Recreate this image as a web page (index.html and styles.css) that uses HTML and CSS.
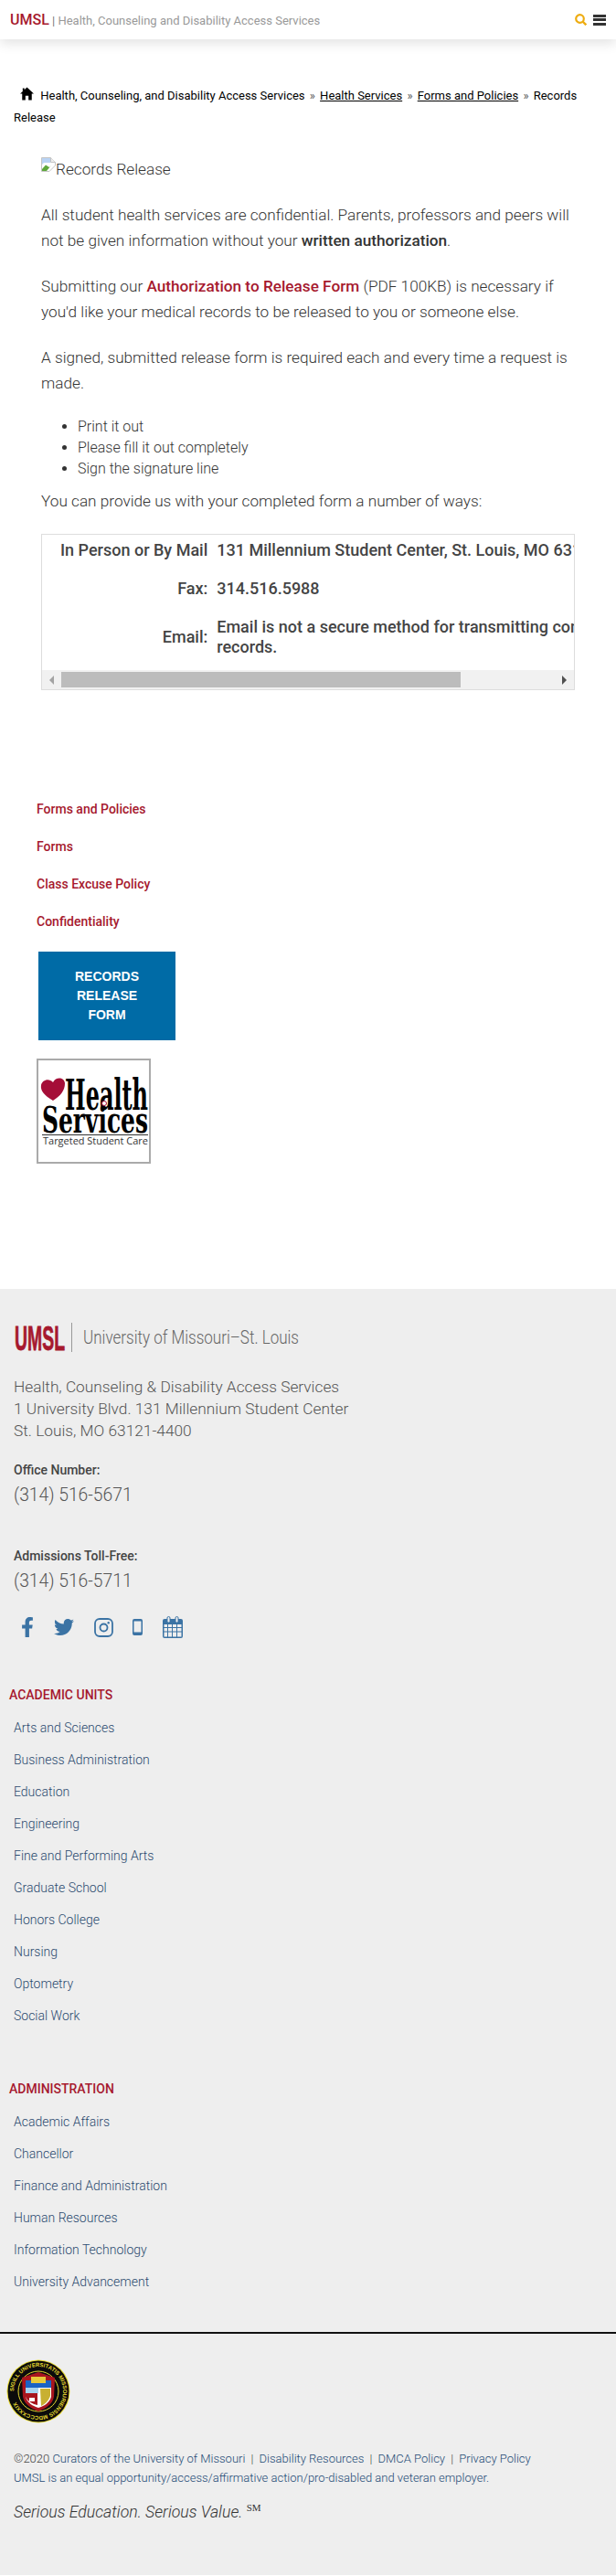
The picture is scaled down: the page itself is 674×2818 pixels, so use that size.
FILE: index.html
```html
<!DOCTYPE html>
<html lang="en">
<head>
    <meta charset="UTF-8">
    <meta name="viewport" content="width=device-width, initial-scale=1.0">
    <title>Records Release</title>
    <link rel="stylesheet" href="styles.css">
</head>
<body>
    <header class="top-bar">
        <div class="site-title"><a class="brand" href="#">UMSL</a> <span class="bar-sep">|</span> Health, Counseling and Disability Access Services</div>
        <div class="top-icons">
            <svg class="search-icon" viewBox="0 0 13 13" width="13" height="13"><circle cx="5.500" cy="5.500" r="4.300" fill="none" stroke="#eeac10" stroke-width="2.200"/><line x1="8.500" y1="8.500" x2="12.300" y2="12.300" stroke="#eeac10" stroke-width="2.400"/></svg>
            <div class="burger"><span></span><span></span><span></span></div>
        </div>
    </header>

    <nav class="breadcrumb">
        <svg class="home-icon" viewBox="0 0 16 16" width="15" height="15"><path d="M8 0.5 L16 8 L13.6 8 L13.6 15.5 L9.8 15.5 L9.8 10.5 L6.2 10.5 L6.2 15.5 L2.4 15.5 L2.4 8 L0 8 L3 5.2 L3 1.5 L5 1.5 L5 3.4 Z" fill="#000"/></svg>
        Health, Counseling, and Disability Access Services <span class="crumb-sep">»</span> <a href="#">Health Services</a> <span class="crumb-sep">»</span> <a href="#">Forms and Policies</a> <span class="crumb-sep">»</span> Records Release
    </nav>

    <main class="content">
        <p class="broken-image"><svg class="broken-icon" viewBox="0 0 16 16" width="16" height="16"><path d="M0.5 0.5 H10.5 L15.5 5.5 V9 L9 15.5 H0.5 Z" fill="#fff" stroke="#c4c4c4"/><path d="M10.5 0.5 V5.5 H15.5" fill="#eee" stroke="#c4c4c4"/><path d="M1 1 H10 V6 H3 L1 8 Z" fill="#b9d3f4"/><path d="M1 13 L5 8.5 L9 11 L11 9 L6 15 H1 Z" fill="#5fa83c"/></svg>Records Release</p>
        <p>All student health services are confidential. Parents, professors and peers will not be given information without your <strong>written authorization</strong>.</p>
        <p>Submitting our <a class="form-link" href="#">Authorization to Release Form</a> (PDF 100KB) is necessary if you'd like your medical records to be released to you or someone else.</p>
        <p>A signed, submitted release form is required each and every time a request is made.</p>
        <ul class="steps">
            <li>Print it out</li>
            <li>Please fill it out completely</li>
            <li>Sign the signature line</li>
        </ul>
        <p>You can provide us with your completed form a number of ways:</p>
        <div class="table-box">
            <div class="table-wrap">
                <table class="ways-table">
                    <tr><th>In Person or By Mail</th><td>131 Millennium Student Center, St. Louis, MO 63121-4400</td></tr>
                    <tr><th>Fax:</th><td>314.516.5988</td></tr>
                    <tr><th>Email:</th><td>Email is not a secure method for transmitting confidential medical<br>records.</td></tr>
                </table>
            </div>
            <div class="scroll-bar">
                <span class="scroll-btn"><i class="arrow-left"></i></span>
                <span class="scroll-thumb"></span>
                <span class="scroll-btn scroll-btn-end"><i class="arrow-right"></i></span>
            </div>
        </div>
    </main>

    <aside class="side-nav">
        <a href="#">Forms and Policies</a>
        <a href="#">Forms</a>
        <a href="#">Class Excuse Policy</a>
        <a href="#">Confidentiality</a>
    </aside>

    <a class="release-button" href="#">RECORDS<br>RELEASE<br>FORM</a>

    <div class="health-logo">
        <svg viewBox="0 0 121 111" width="121" height="111">
            <path d="M16 44 C6 38 2 33 3 27 C4 21 12 19 16 24 C19 18 28 18 29 25 C29 33 24 39 16 44 Z" fill="#a50e38"/>
            <text x="29" y="54" class="logo-word" textLength="91" lengthAdjust="spacingAndGlyphs">Health</text>
            <text x="4" y="79" class="logo-word logo-word-low" textLength="116" lengthAdjust="spacingAndGlyphs">Services</text>
            <circle cx="72" cy="47" r="2.500" fill="#fff" stroke="#a50e38" stroke-width="1"/>
            <rect x="4" y="81" width="116" height="1" fill="#333"/>
            <text x="5" y="92" class="logo-tag" textLength="115" lengthAdjust="spacingAndGlyphs">Targeted Student Care</text>
        </svg>
    </div>

    <footer class="site-footer">
        <div class="footer-brand">
            <svg viewBox="0 0 58 32" width="58" height="32"><text x="1" y="29.500" class="umsl-mark" textLength="55" lengthAdjust="spacingAndGlyphs">UMSL</text></svg>
            <span class="brand-rule"></span>
            <svg class="brand-name" viewBox="0 0 240 32" width="240" height="32"><text x="0" y="23" textLength="236" lengthAdjust="spacingAndGlyphs">University of Missouri–St. Louis</text></svg>
        </div>
        <address class="footer-address">Health, Counseling &amp; Disability Access Services<br>1 University Blvd. 131 Millennium Student Center<br>St. Louis, MO 63121-4400</address>
        <div class="phone-block">
            <strong>Office Number:</strong>
            <span class="phone">(314) 516-5671</span>
        </div>
        <div class="phone-block phone-second">
            <strong>Admissions Toll-Free:</strong>
            <span class="phone">(314) 516-5711</span>
        </div>
        <div class="social">
            <svg class="ico-fb" viewBox="0 0 320 512" width="14" height="22"><path d="M279.14 288l14.22-92.66h-88.91v-60.13c0-25.35 12.42-50.06 52.24-50.06h40.42V6.26S260.43 0 225.36 0c-73.22 0-121.08 44.38-121.08 124.72v70.62H22.89V288h81.39v224h100.17V288z"/></svg>
            <svg class="ico-tw" viewBox="0 0 512 512" width="22" height="22"><path d="M459.37 151.716c.325 4.548.325 9.097.325 13.645 0 138.72-105.583 298.558-298.558 298.558-59.452 0-114.68-17.219-161.137-47.106 8.447.974 16.568 1.299 25.34 1.299 49.055 0 94.213-16.568 130.274-44.832-46.132-.975-84.792-31.188-98.112-72.772 6.498.974 12.995 1.624 19.818 1.624 9.421 0 18.843-1.3 27.614-3.573-48.081-9.747-84.143-51.98-84.143-102.985v-1.299c13.969 7.797 30.214 12.67 47.431 13.319-28.264-18.843-46.781-51.005-46.781-87.391 0-19.492 5.197-37.36 14.294-52.954 51.655 63.675 129.3 105.258 216.365 109.807-1.624-7.797-2.599-15.918-2.599-24.04 0-57.828 46.782-104.934 104.934-104.934 30.213 0 57.502 12.67 76.67 33.137 23.715-4.548 46.456-13.32 66.599-25.34-7.798 24.366-24.366 44.833-46.132 57.827 21.117-2.273 41.584-8.122 60.426-16.243-14.292 20.791-32.161 39.308-52.628 54.253z"/></svg>
            <svg class="ico-ig" viewBox="0 0 21 21" width="21" height="21"><rect x="1" y="1" width="19" height="19" rx="5" fill="none" stroke-width="1.800"/><circle cx="10.500" cy="10.500" r="4" fill="none" stroke-width="1.800"/><circle cx="15.700" cy="5.300" r="1.200" class="ico-fill"/></svg>
            <svg class="ico-ph" viewBox="0 0 11 18" width="11" height="18"><path fill-rule="evenodd" d="M2 0 H9 A2 2 0 0 1 11 2 V16 A2 2 0 0 1 9 18 H2 A2 2 0 0 1 0 16 V2 A2 2 0 0 1 2 0 Z M1.500 2.500 V14.500 H9.500 V2.500 Z"/></svg>
            <svg class="ico-cal" viewBox="0 0 22 24" width="22" height="24"><path fill-rule="evenodd" d="M2 3 H20 A2 2 0 0 1 22 5 V22 A2 2 0 0 1 20 24 H2 A2 2 0 0 1 0 22 V5 A2 2 0 0 1 2 3 Z M1.500 9 V12 H5 V9 Z M6 9 V12 H10 V9 Z M11 9 V12 H15 V9 Z M16 9 V12 H20.500 V9 Z M1.500 13 V16.500 H5 V13 Z M6 13 V16.500 H10 V13 Z M11 13 V16.500 H15 V13 Z M16 13 V16.500 H20.500 V13 Z M1.500 17.500 V22.500 H5 V17.500 Z M6 17.500 V22.500 H10 V17.500 Z M11 17.500 V22.500 H15 V17.500 Z M16 17.500 V22.500 H20.500 V17.500 Z"/><rect x="5" y="0.500" width="3" height="6.500" rx="1.500" fill="#eee" stroke-width="1"/><rect x="14" y="0.500" width="3" height="6.500" rx="1.500" fill="#eee" stroke-width="1"/></svg>
        </div>

        <h3 class="links-title">ACADEMIC UNITS</h3>
        <ul class="footer-links">
            <li><a href="#">Arts and Sciences</a></li>
            <li><a href="#">Business Administration</a></li>
            <li><a href="#">Education</a></li>
            <li><a href="#">Engineering</a></li>
            <li><a href="#">Fine and Performing Arts</a></li>
            <li><a href="#">Graduate School</a></li>
            <li><a href="#">Honors College</a></li>
            <li><a href="#">Nursing</a></li>
            <li><a href="#">Optometry</a></li>
            <li><a href="#">Social Work</a></li>
        </ul>

        <h3 class="links-title">ADMINISTRATION</h3>
        <ul class="footer-links">
            <li><a href="#">Academic Affairs</a></li>
            <li><a href="#">Chancellor</a></li>
            <li><a href="#">Finance and Administration</a></li>
            <li><a href="#">Human Resources</a></li>
            <li><a href="#">Information Technology</a></li>
            <li><a href="#">University Advancement</a></li>
        </ul>

        <hr class="footer-rule">

        <svg class="seal" viewBox="0 0 70 70" width="70" height="70">
            <circle cx="35" cy="35" r="34.500" fill="#e6d92f"/>
            <circle cx="35" cy="35" r="33.500" fill="#0b0b0b"/>
            <circle cx="35" cy="35" r="22" fill="none" stroke="#e6d92f" stroke-width="1"/>
            <path id="sealRing" d="M35 35 m-27 0 a27 27 0 1 1 54 0 a27 27 0 1 1 -54 0" fill="none"/>
            <text class="seal-text"><textPath href="#sealRing">SIGILL UNIVERSITATIS MISSOURIENSIS MDCCCXXXIX</textPath></text>
            <path d="M17 20 L35 14 L53 20 L52 41 C50 50 42 54 35 57 C28 54 20 50 18 41 Z" fill="#a8151e"/>
            <path d="M21 23 H49 V41 C47 48 41 51 35 53 C29 51 23 48 21 41 Z" fill="#fff"/>
            <rect x="21" y="23" width="28" height="8" fill="#1a63c4"/>
            <rect x="27" y="19" width="16" height="7" fill="#e8c93a"/>
            <path d="M21 31 H35 V37 H21 Z" fill="#a6d3ee"/>
            <path d="M21 37 H34 V50 C29 49 23 46 21 41 Z" fill="#a8151e"/>
            <path d="M25 42 H31 V46 H25 Z" fill="#fff"/>
            <path d="M37 32 H48 V40 C46 46 42 49 38 51 Z" fill="#c8b032"/>
        </svg>

        <div class="legal">
            <p>©2020 <a href="#">Curators of the University of Missouri</a> <span class="pipe">|</span> <a href="#">Disability Resources</a> <span class="pipe">|</span> <a href="#">DMCA Policy</a> <span class="pipe">|</span> <a href="#">Privacy Policy</a></p>
            <p><a href="#">UMSL is an equal opportunity/access/affirmative action/pro-disabled and veteran employer.</a></p>
        </div>
        <p class="tagline">Serious Education. Serious Value. <sup>SM</sup></p>
    </footer>
</body>
</html>
```

FILE: styles.css
```css
body {
    font-family: Roboto, Arial, sans-serif;
    margin: 0;
    padding: 0;
    background-color: #fff;
    color: #333;
}
a {
    color: inherit;
    text-decoration: none;
}

/* top bar */
.top-bar {
    height: 43px;
    background-color: #fff;
    box-shadow: 0 4px 14px rgba(0,0,0,0.12);
    display: flex;
    justify-content: space-between;
    align-items: center;
    padding: 0 11px;
}
.site-title {
    font-size: 13px;
    color: #999;
}
.brand {
    font-size: 16px;
    font-weight: 500;
    color: #a6192e;
}
.bar-sep {
    color: #777;
}
.top-icons {
    display: flex;
    align-items: center;
    gap: 7px;
}
.burger {
    width: 14px;
    display: flex;
    flex-direction: column;
    gap: 1.5px;
}
.burger span {
    height: 3px;
    background-color: #333;
}

/* breadcrumb */
.breadcrumb {
    margin-top: 50px;
    padding: 0 15px;
    font-size: 13px;
    line-height: 24px;
    color: #000;
}
.breadcrumb a {
    text-decoration: underline;
}
.home-icon {
    margin: 0 4px 0 7px;
    vertical-align: -1px;
}
.crumb-sep {
    color: #555;
    margin: 0 2px;
}

/* main text */
.content {
    padding: 0 45px;
    font-size: 17.2px;
    font-weight: 300;
    line-height: 28px;
}
.content p {
    margin: 0 0 22px;
}
.content strong {
    font-weight: 500;
}
.content .broken-image {
    margin: 30px 0 22px;
}
.broken-icon {
    vertical-align: 3px;
}
.form-link {
    color: #a6192e;
    font-weight: 500;
}
.steps {
    margin: 0 0 10px;
    padding: 0 0 0 40px;
    font-size: 16px;
    line-height: 23px;
}
.table-box {
    border: 1px solid #ddd;
}
.table-wrap {
    overflow: hidden;
}
.ways-table {
    margin: -4px 0 4px;
    border-collapse: collapse;
    font-weight: 500;
    font-size: 18px;
    line-height: 22px;
    white-space: nowrap;
    color: #444;
}
.ways-table th {
    font-weight: 500;
    text-align: right;
    padding: 10px 5px 10px 20px;
}
.ways-table td {
    padding: 10px 20px 10px 5px;
}
.scroll-bar {
    height: 21px;
    box-sizing: border-box;
    padding: 2px 0;
    display: flex;
    background-color: #f1f1f1;
}
.scroll-btn {
    width: 21px;
    display: flex;
    justify-content: center;
    align-items: center;
}
.scroll-btn-end {
    margin-left: auto;
}
.scroll-thumb {
    width: 437px;
    background-color: #bcbcbc;
}
.arrow-left {
    border: 5px solid transparent;
    border-left: none;
    border-right-color: #a3a3a3;
}
.arrow-right {
    border: 5px solid transparent;
    border-right: none;
    border-left-color: #505050;
}

/* side links */
.side-nav {
    margin-top: 122px;
    padding-left: 40px;
    display: flex;
    flex-direction: column;
    gap: 24px;
    font-size: 14px;
    font-weight: 500;
    line-height: 17px;
    color: #a6192e;
}
.release-button {
    display: block;
    width: 150px;
    height: 97px;
    box-sizing: border-box;
    margin: 24px 0 0 42px;
    padding-top: 17px;
    background-color: #006ba6;
    color: #fff;
    font-family: "Liberation Sans", Arial, sans-serif;
    font-size: 14px;
    font-weight: bold;
    line-height: 21px;
    text-align: center;
}
.health-logo {
    width: 125px;
    height: 115px;
    margin: 20px 0 0 40px;
    border: 2px solid #aaa;
    box-sizing: border-box;
    background-color: #fff;
}
.logo-word {
    font-family: "DejaVu Serif", serif;
    font-weight: bold;
    font-size: 46px;
    fill: #000;
}
.logo-word-low {
    font-size: 40px;
}
.logo-tag {
    font-family: "Open Sans", sans-serif;
    font-size: 11px;
    fill: #333;
}

/* footer */
.site-footer {
    margin-top: 137px;
    height: 1407px;
    box-sizing: border-box;
    padding-top: 37px;
    background-color: #eee;
    color: #555;
}
.footer-brand {
    display: flex;
    align-items: center;
    padding-left: 15px;
}
.umsl-mark {
    font-family: "Liberation Sans", sans-serif;
    font-weight: bold;
    font-size: 37px;
    fill: #a6192e;
    stroke: #a6192e;
    stroke-width: 0.8px;
}
.brand-rule {
    width: 1px;
    height: 32px;
    margin: 0 12px 0 5px;
    background-color: #999;
}
.brand-name text {
    font-size: 20px;
    font-weight: 300;
    fill: #666;
}
.footer-address {
    margin: 26px 0 0 15px;
    font-style: normal;
    font-size: 17.3px;
    font-weight: 300;
    line-height: 24px;
}
.phone-block {
    margin: 21px 0 0 15px;
}
.phone-block strong {
    display: block;
    font-size: 14px;
    font-weight: 500;
    line-height: 20px;
    color: #444;
}
.phone {
    display: block;
    margin-top: 4px;
    font-size: 19.300px;
    font-weight: 300;
    line-height: 28px;
}
.phone-second {
    margin-top: 42px;
}
.social {
    display: flex;
    align-items: center;
    margin: 24px 0 0 23px;
    height: 24px;
}
.social svg {
    fill: #3b73a4;
    stroke: none;
}
.social .ico-ig rect,
.social .ico-ig circle,
.social .ico-cal rect {
    stroke: #3b73a4;
}
.social .ico-ig .ico-fill {
    fill: #3b73a4;
    stroke: none;
}
.ico-tw {
    margin-left: 22px;
}
.ico-ig {
    margin-left: 22px;
}
.ico-ph {
    margin-left: 21px;
}
.ico-cal {
    margin-left: 22px;
}
.links-title {
    margin: 52px 0 0 10px;
    font-size: 14px;
    font-weight: 500;
    line-height: 20px;
    color: #a6192e;
}
.footer-links {
    list-style: none;
    margin: 9px 0 0;
    padding: 0 0 0 15px;
    font-size: 14px;
    font-weight: 300;
    line-height: 35px;
    color: #2b4a6f;
}
.footer-rule {
    height: 2px;
    margin: 37px 0 0;
    border: none;
    background-color: #111;
}
.seal {
    display: block;
    margin: 28px 0 0 7px;
}
.seal-text {
    font-family: "Liberation Sans", sans-serif;
    font-size: 6px;
    font-weight: bold;
    fill: #e6d92f;
}
.legal {
    margin: 28px 0 0 15px;
    font-size: 13px;
    line-height: 21px;
    font-weight: 300;
    color: #444;
}
.legal p {
    margin: 0;
}
.legal a {
    color: #234a75;
}
.pipe {
    margin: 0 3px;
}
.tagline {
    margin: 16px 0 0 15px;
    font-size: 17.7px;
    font-style: italic;
    font-weight: 300;
    color: #333;
}
.tagline sup {
    font-family: "Liberation Serif", serif;
    font-style: normal;
    font-size: 11px;
    font-weight: 400;
}
```
